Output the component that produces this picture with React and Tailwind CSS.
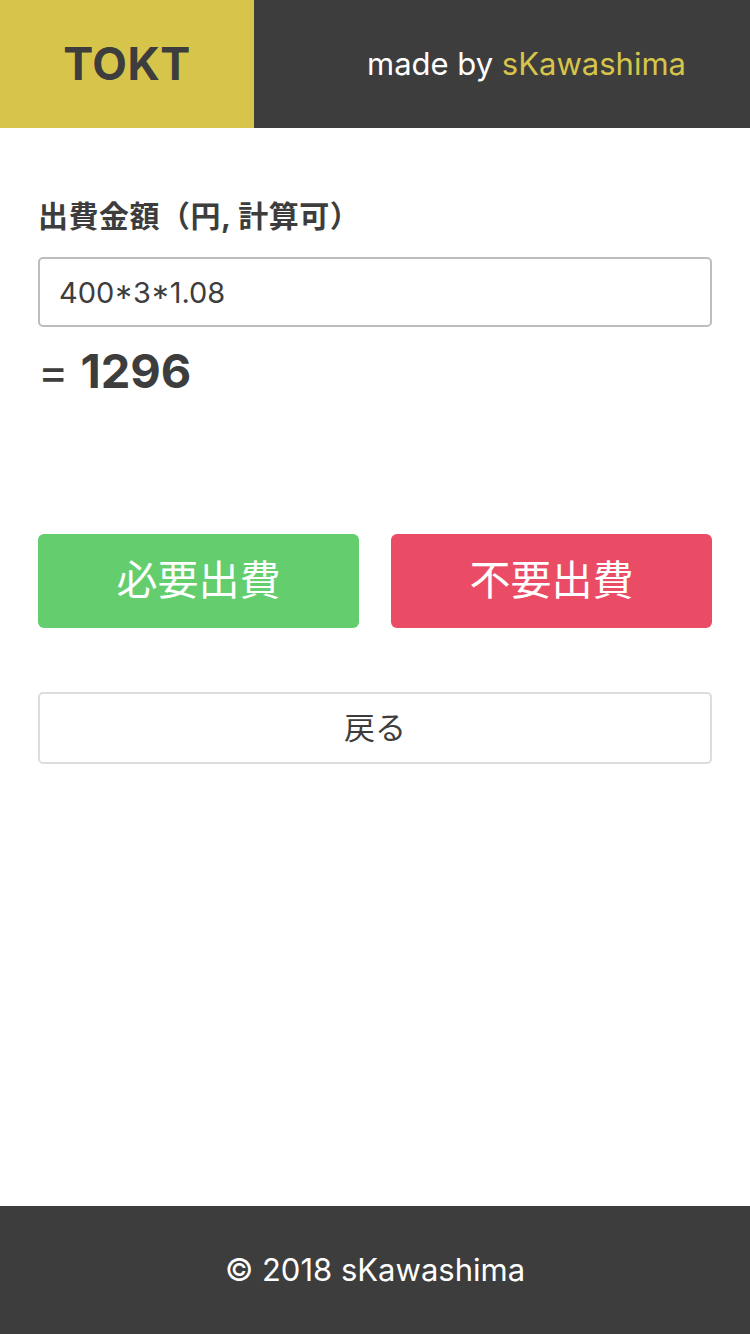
import { useState } from 'react';

const font = { fontFamily: 'Inter, "Noto Sans CJK JP", sans-serif' };

const App = () => {
  const [expr, setExpr] = useState('400*3*1.08');

  let result = '';
  try {
    if (/^[0-9+\-*/.() ]+$/.test(expr)) result = Math.round(Function(`return (${expr})`)());
  } catch (e) {
    result = '';
  }

  return (
    <div className="min-h-[1334px] flex flex-col bg-white text-[#3d3d3d]" style={font}>
      <header className="h-[128px] flex bg-[#3d3d3d]">
        <div className="w-[254px] bg-[#d6c54a] flex items-center justify-center">
          <h1 className="text-[45px] font-bold text-[#3d3d3d] tracking-[0.5px]">TOKT</h1>
        </div>
        <div className="flex-1 flex items-center justify-end pr-[64px]">
          <p className="text-[31px] text-white">
            made by <span className="text-[#d6c54a]">sKawashima</span>
          </p>
        </div>
      </header>

      <main className="flex-1 px-[38px]">
        <div className="pt-[66px]">
          <label className="block text-[30px] font-bold leading-[44px] tracking-[0.5px]">出費金額（円, 計算可）</label>
          <input
            className="mt-[19px] w-full h-[70px] px-[19px] text-[29px] text-[#3d3d3d] border-2 border-[#bdbdbd] rounded-[5px] outline-none"
            value={expr}
            onChange={e => setExpr(e.target.value)}
          />
          <p className="mt-[12px] h-[64px] leading-[64px] flex items-baseline gap-[12px]">
            <span className="text-[46px]">=</span>
            <span className="text-[47px] font-bold">{result}</span>
          </p>
        </div>

        <div className="mt-[131px] flex gap-[32px]">
          <button className="flex-1 h-[94px] rounded-[6px] bg-[#64ce6e] text-white text-[41px]">必要出費</button>
          <button className="flex-1 h-[94px] rounded-[6px] bg-[#ea4c65] text-white text-[41px]">不要出費</button>
        </div>

        <button className="mt-[64px] w-full h-[72px] rounded-[5px] border-2 border-[#dddddd] bg-white text-[31px] text-[#3d3d3d]">
          戻る
        </button>
      </main>

      <footer className="h-[128px] bg-[#3d3d3d] flex items-center justify-center">
        <p className="text-[31px] text-white">© 2018 sKawashima</p>
      </footer>
    </div>
  );
};

export default App;
